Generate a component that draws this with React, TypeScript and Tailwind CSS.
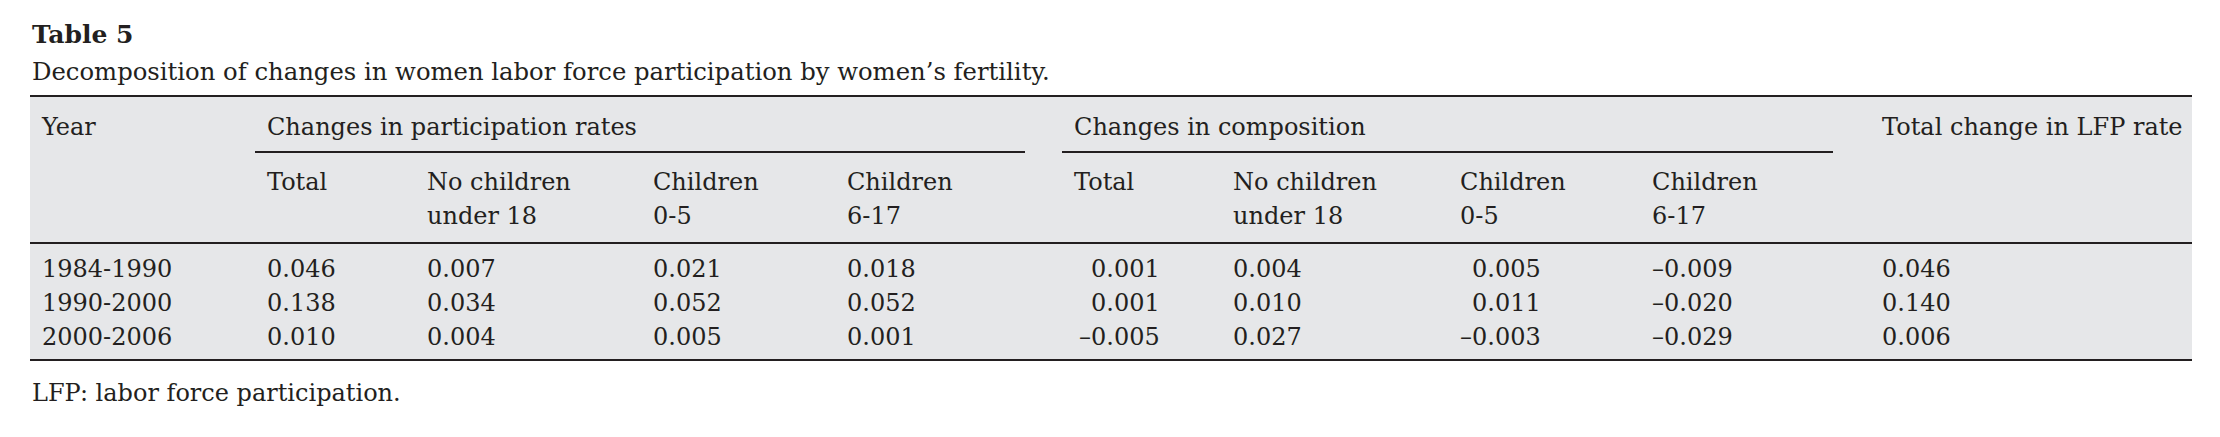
const rows = [
  { year: '1984-1990', p: ['0.046', '0.007', '0.021', '0.018'], c: ['0.001', '0.004', '0.005', '–0.009'], total: '0.046' },
  { year: '1990-2000', p: ['0.138', '0.034', '0.052', '0.052'], c: ['0.001', '0.010', '0.011', '–0.020'], total: '0.140' },
  { year: '2000-2006', p: ['0.010', '0.004', '0.005', '0.001'], c: ['–0.005', '0.027', '–0.003', '–0.029'], total: '0.006' },
];

// pads positives with an invisible dash so the decimals line up
function Num({ v, pad }: { v: string; pad?: boolean }) {
  if (pad && !v.startsWith('–')) {
    return (
      <>
        <span className="invisible">–</span>
        {v}
      </>
    );
  }
  return <>{v}</>;
}

export default function App() {
  const rule = 'border-[#231f20]';

  return (
    <div className="min-h-screen bg-white pt-[16px] pl-[30px] pr-[28px] text-[#231f20] font-['DejaVu_Serif',serif] text-[24px]">
      <h2 className="font-bold leading-[37px] pl-[2px] text-[25px]">Table 5</h2>
      <p className="leading-[37px] pl-[2px] text-[24.3px]">
        Decomposition of changes in women labor force participation by women’s fertility.
      </p>

      <div className={`mt-[5px] border-y-2 ${rule} bg-[#e6e7e9]`}>
        <table className="w-full table-fixed border-separate border-spacing-0 leading-[34px]">
          <colgroup>
            <col className="w-[225px]" />
            <col className="w-[160px]" />
            <col className="w-[226px]" />
            <col className="w-[194px]" />
            <col className="w-[227px]" />
            <col className="w-[159px]" />
            <col className="w-[227px]" />
            <col className="w-[192px]" />
            <col className="w-[230px]" />
            <col className="w-[322px]" />
          </colgroup>
          <thead>
            <tr>
              <th rowSpan={2} className={`align-top text-left font-normal pl-3 pt-[13px] border-b-2 ${rule}`}>
                Year
              </th>
              <th colSpan={4} className="align-top text-left font-normal pt-[13px]">
                <div className={`mr-[37px] pl-3 pb-[7px] border-b-2 ${rule}`}>Changes in participation rates</div>
              </th>
              <th colSpan={4} className="align-top text-left font-normal pt-[13px]">
                <div className={`mr-[37px] pl-3 pb-[7px] border-b-2 ${rule}`}>Changes in composition</div>
              </th>
              <th rowSpan={2} className={`align-top text-left font-normal pl-3 pt-[13px] border-b-2 ${rule}`}>
                Total change in LFP rate
              </th>
            </tr>
            <tr className="align-top text-left">
              <th className={`font-normal pl-3 pt-3 pb-[9px] border-b-2 ${rule}`}>Total</th>
              <th className={`font-normal pl-3 pt-3 pb-[9px] border-b-2 ${rule}`}>
                No children
                <br />
                under 18
              </th>
              <th className={`font-normal pl-3 pt-3 pb-[9px] border-b-2 ${rule}`}>
                Children
                <br />
                0-5
              </th>
              <th className={`font-normal pl-3 pt-3 pb-[9px] border-b-2 ${rule}`}>
                Children
                <br />
                6-17
              </th>
              <th className={`font-normal pl-3 pt-3 pb-[9px] border-b-2 ${rule}`}>Total</th>
              <th className={`font-normal pl-3 pt-3 pb-[9px] border-b-2 ${rule}`}>
                No children
                <br />
                under 18
              </th>
              <th className={`font-normal pl-3 pt-3 pb-[9px] border-b-2 ${rule}`}>
                Children
                <br />
                0-5
              </th>
              <th className={`font-normal pl-3 pt-3 pb-[9px] border-b-2 ${rule}`}>
                Children
                <br />
                6-17
              </th>
            </tr>
          </thead>
          <tbody>
            {rows.map((r, i) => {
              const py = i === 0 ? 'pt-[8px]' : i === rows.length - 1 ? 'pb-[5px]' : '';
              return (
                <tr key={r.year}>
                  <td className={`pl-3 ${py}`}>{r.year}</td>
                  {r.p.map((v, j) => (
                    <td key={j} className={`pl-3 ${py}`}>{v}</td>
                  ))}
                  <td className={`pl-[17px] ${py}`}><Num v={r.c[0]} pad /></td>
                  <td className={`pl-3 ${py}`}>{r.c[1]}</td>
                  <td className={`pl-3 ${py}`}><Num v={r.c[2]} pad /></td>
                  <td className={`pl-3 ${py}`}>{r.c[3]}</td>
                  <td className={`pl-3 ${py}`}>{r.total}</td>
                </tr>
              );
            })}
          </tbody>
        </table>
      </div>

      <p className="mt-[15px] leading-[34px] pl-[2px]">LFP: labor force participation.</p>
    </div>
  );
}
